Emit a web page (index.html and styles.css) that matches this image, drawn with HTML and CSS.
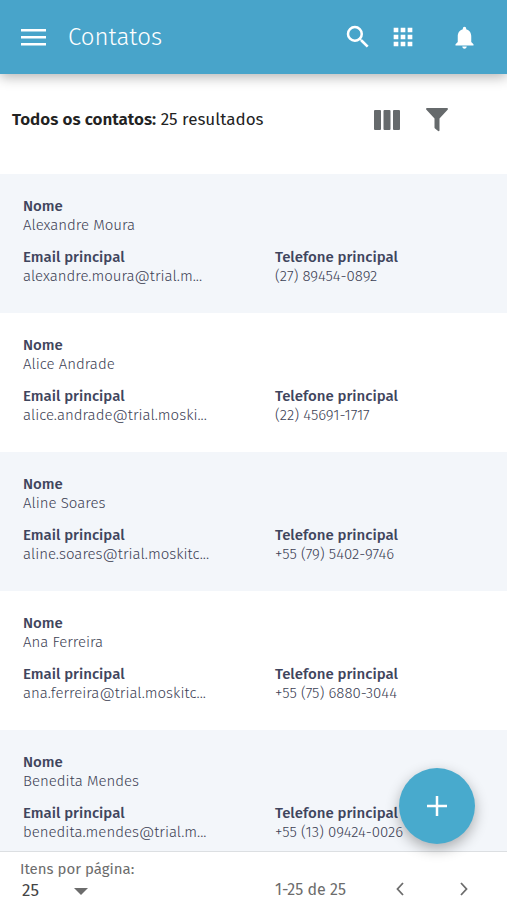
FILE: index.html
```html
<!DOCTYPE html>
<html lang="pt-BR">
<head>
    <meta charset="UTF-8">
    <meta name="viewport" content="width=device-width, initial-scale=1.0">
    <title>Contatos</title>
    <link rel="stylesheet" href="styles.css">
</head>
<body>
    <header class="topbar">
        <button class="icon-btn" type="button" aria-label="Menu">
            <svg width="26" height="18" viewBox="0 0 26 18" fill="currentColor"><path d="M1 1h25v2.500H1zM1 8h25v2.500H1zM1 15h25v2.500H1z"/></svg>
        </button>
        <h1>Contatos</h1>
        <nav class="topbar-actions">
            <button class="icon-btn" type="button" aria-label="Buscar">
                <svg width="30" height="30" viewBox="0 0 24 24" fill="currentColor"><path d="M15.5 14h-.79l-.28-.27A6.47 6.47 0 0 0 16 9.5 6.5 6.5 0 1 0 9.5 16c1.61 0 3.09-.59 4.23-1.57l.27.28v.79l5 4.99L20.49 19l-4.99-5zm-6 0a4.5 4.5 0 1 1 0-9 4.5 4.5 0 0 1 0 9z"/></svg>
            </button>
            <button class="icon-btn" type="button" aria-label="Aplicativos">
                <svg width="28" height="28" viewBox="0 0 24 24" fill="currentColor"><path d="M4 8h4V4H4v4zm6 12h4v-4h-4v4zm-6 0h4v-4H4v4zm0-6h4v-4H4v4zm6 0h4v-4h-4v4zm6-10v4h4V4h-4zm-6 4h4V4h-4v4zm6 6h4v-4h-4v4zm0 6h4v-4h-4v4z"/></svg>
            </button>
            <button class="icon-btn bell" type="button" aria-label="Notificações">
                <svg width="27" height="27" viewBox="0 0 24 24" fill="currentColor"><path d="M12 22c1.1 0 2-.9 2-2h-4c0 1.1.9 2 2 2zm6-6v-5c0-3.07-1.63-5.64-4.5-6.32V4a1.5 1.5 0 0 0-3 0v.68C7.64 5.36 6 7.92 6 11v5l-2 2v1h16v-1l-2-2z"/></svg>
            </button>
        </nav>
    </header>

    <div class="toolbar">
        <p><strong>Todos os contatos:</strong> 25 resultados</p>
        <div class="toolbar-actions">
            <button class="icon-btn" type="button" aria-label="Colunas">
                <svg width="26" height="20" viewBox="0 0 26 20" fill="currentColor"><rect width="7" height="20" rx="1"/><rect x="9.5" width="7" height="20" rx="1"/><rect x="19" width="7" height="20" rx="1"/></svg>
            </button>
            <button class="icon-btn" type="button" aria-label="Filtrar">
                <svg width="22" height="24" viewBox="0 0 22 24" fill="currentColor"><path d="M.6 0h20.8q.9.7.2 1.800L13.500 10.500v12q-.4 1.100-1.400.6L9 20.500q-.5-.4-.5-1v-9L.4 1.800Q-.3.700.6 0z"/></svg>
            </button>
        </div>
    </div>

    <main class="contacts">
        <dl class="contact">
            <div class="field name"><dt>Nome</dt><dd>Alexandre Moura</dd></div>
            <div class="field"><dt>Email principal</dt><dd>alexandre.moura@trial.m...</dd></div>
            <div class="field"><dt>Telefone principal</dt><dd>(27) 89454-0892</dd></div>
        </dl>
        <dl class="contact">
            <div class="field name"><dt>Nome</dt><dd>Alice Andrade</dd></div>
            <div class="field"><dt>Email principal</dt><dd>alice.andrade@trial.moski...</dd></div>
            <div class="field"><dt>Telefone principal</dt><dd>(22) 45691-1717</dd></div>
        </dl>
        <dl class="contact">
            <div class="field name"><dt>Nome</dt><dd>Aline Soares</dd></div>
            <div class="field"><dt>Email principal</dt><dd>aline.soares@trial.moskitc...</dd></div>
            <div class="field"><dt>Telefone principal</dt><dd>+55 (79) 5402-9746</dd></div>
        </dl>
        <dl class="contact">
            <div class="field name"><dt>Nome</dt><dd>Ana Ferreira</dd></div>
            <div class="field"><dt>Email principal</dt><dd>ana.ferreira@trial.moskitc...</dd></div>
            <div class="field"><dt>Telefone principal</dt><dd>+55 (75) 6880-3044</dd></div>
        </dl>
        <dl class="contact">
            <div class="field name"><dt>Nome</dt><dd>Benedita Mendes</dd></div>
            <div class="field"><dt>Email principal</dt><dd>benedita.mendes@trial.m...</dd></div>
            <div class="field"><dt>Telefone principal</dt><dd>+55 (13) 09424-0026</dd></div>
        </dl>
    </main>

    <footer class="paginator">
        <div class="page-size">
            <label for="pageSize">Itens por página:</label>
            <div class="select">
                <select id="pageSize">
                    <option>25</option>
                    <option>50</option>
                    <option>100</option>
                </select>
                <svg width="14" height="7" viewBox="0 0 14 7" fill="currentColor"><path d="M0 0h14L7 7z"/></svg>
            </div>
        </div>
        <div class="pages">
            <span>1-25 de 25</span>
            <button class="icon-btn" type="button" aria-label="Página anterior">
                <svg width="8" height="14" viewBox="0 0 8 14" fill="none" stroke="currentColor" stroke-width="1.800"><path d="M7 1L1.500 7 7 13"/></svg>
            </button>
            <button class="icon-btn" type="button" aria-label="Próxima página">
                <svg width="8" height="14" viewBox="0 0 8 14" fill="none" stroke="currentColor" stroke-width="1.800"><path d="M1 1l5.500 6L1 13"/></svg>
            </button>
        </div>
    </footer>

    <button class="fab" type="button" aria-label="Adicionar contato">
        <svg width="20" height="20" viewBox="0 0 20 20" stroke="currentColor" stroke-width="2.500"><path d="M10 0v20M0 10h20"/></svg>
    </button>
</body>
</html>
```
FILE: styles.css
```css
* {
    box-sizing: border-box;
}
body {
    display: flex;
    flex-direction: column;
    height: 100vh;
    margin: 0;
    overflow: hidden;
    font-family: "Fira Sans", "Noto Sans", sans-serif;
    font-size: 15px;
    background: #fff;
    color: #5d6272;
}
h1, p, dl, dd {
    margin: 0;
}
svg {
    display: block;
}
.icon-btn {
    display: flex;
    align-items: center;
    justify-content: center;
    padding: 0;
    border: none;
    background: none;
    color: inherit;
    cursor: pointer;
}
.topbar {
    display: flex;
    flex-shrink: 0;
    align-items: center;
    gap: 22px;
    height: 74px;
    padding: 0 29px 0 20px;
    background: #48a4ca;
    color: #fff;
    box-shadow: 0 3px 12px rgba(0, 0, 0, 0.3);
}
.topbar h1 {
    font-size: 24px;
    font-weight: 300;
}
.topbar-actions {
    display: flex;
    align-items: center;
    gap: 16px;
    margin-left: auto;
}
.bell {
    margin-left: 18px;
}
.toolbar {
    display: flex;
    flex-shrink: 0;
    align-items: center;
    justify-content: space-between;
    height: 100px;
    padding: 0 59px 9px 12px;
    font-size: 17px;
    color: #222;
}
.toolbar strong {
    font-weight: 600;
}
.toolbar-actions {
    display: flex;
    align-items: center;
    gap: 26px;
    color: #666a6c;
}
.contacts {
    flex: 1;
    min-height: 0;
    overflow: hidden;
}
.contact {
    display: grid;
    grid-template-columns: 1fr 1fr;
    gap: 13px 20px;
    padding: 23px 0 27px 23px;
    line-height: 19px;
}
.contact:nth-child(odd) {
    background: #f3f6fa;
}
.field {
    white-space: nowrap;
}
.name {
    grid-column: 1 / -1;
}
dt {
    font-weight: 500;
    color: #3f455d;
}
dd {
    font-weight: 300;
    color: #3c4154;
}
.paginator {
    display: flex;
    flex-shrink: 0;
    align-items: flex-start;
    justify-content: space-between;
    height: 49px;
    padding: 7px 39px 0 20px;
    border-top: 1px solid #dcdfe2;
    background: #fff;
    color: #6c6c6c;
}
.page-size label {
    display: block;
    line-height: 20px;
}
.select {
    display: flex;
    align-items: center;
    width: 68px;
    padding-left: 2px;
}
.select select {
    flex: 1;
    min-width: 0;
    height: 24px;
    padding: 0;
    border: none;
    appearance: none;
    background: none;
    font: inherit;
    font-size: 17px;
    line-height: 24px;
    color: #444;
}
.pages {
    display: flex;
    align-items: center;
    align-self: flex-end;
    height: 22px;
    font-size: 16px;
}
.pages .icon-btn {
    width: 8px;
    margin-left: 56px;
}
.pages span + .icon-btn {
    margin-left: 50px;
}
.fab {
    position: fixed;
    right: 32px;
    bottom: 56px;
    display: flex;
    align-items: center;
    justify-content: center;
    width: 76px;
    height: 76px;
    padding: 0;
    border: none;
    border-radius: 50%;
    background: #48aacd;
    color: #fff;
    box-shadow: 0 5px 14px rgba(0, 0, 0, 0.3);
    cursor: pointer;
}
```
